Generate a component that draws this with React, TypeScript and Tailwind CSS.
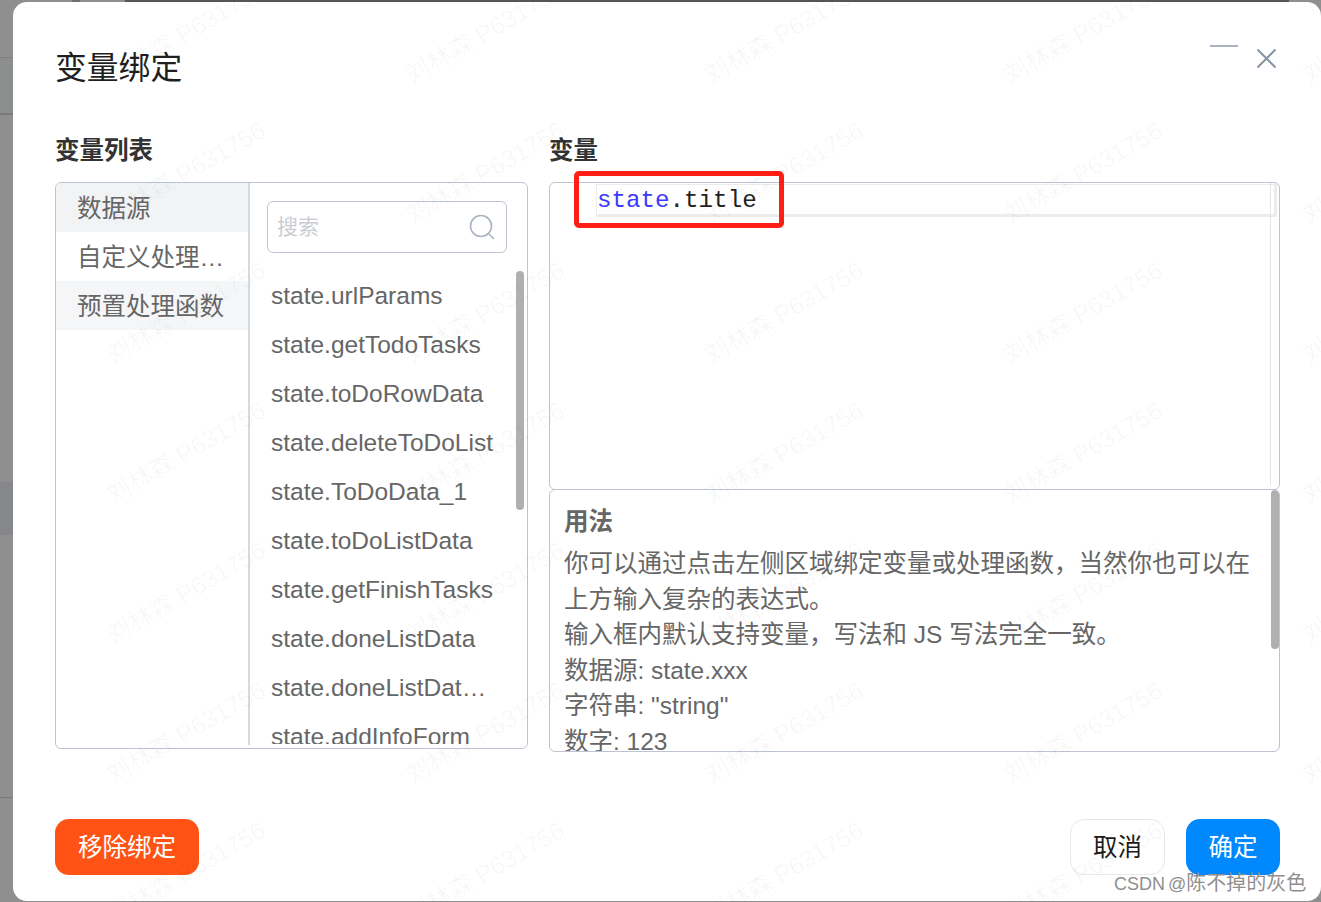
const sans = "font-['Liberation_Sans','Noto_Sans_CJK_SC',sans-serif]";

const vars = [
  "state.urlParams",
  "state.getTodoTasks",
  "state.toDoRowData",
  "state.deleteToDoList",
  "state.ToDoData_1",
  "state.toDoListData",
  "state.getFinishTasks",
  "state.doneListData",
  "state.doneListData_1",
  "state.addInfoForm",
  "state.editInfoForm",
];

const marks = Array.from({ length: 48 });

export default function App() {
  return (
    <div className={`relative h-[902px] w-[1321px] overflow-hidden bg-[#8f8f8f] ${sans}`}>
      {/* dimmed page behind the dialog: top edge */}
      <div className="flex h-[2px]">
        <div className="w-[72px] bg-[#8f8f8f]" />
        <div className="w-[8px] bg-[#6f6f6f]" />
        <div className="w-[45px] bg-[#8f8f8f]" />
        <div className="w-[1164px] bg-[#565656]" />
        <div className="flex-1 bg-[#8f8f8f]" />
      </div>
      <div className="flex">
        {/* dimmed page behind the dialog: left edge */}
        <div className="flex w-[13px] flex-col">
          <div className="h-[56px] border-b border-[#7f7f7f]" />
          <div className="h-[57px] border-b-2 border-[#7a7a7a] bg-[#8c8e8d]" />
          <div className="h-[367px]" />
          <div className="h-[53px] bg-[#85878a]" />
          <div className="h-[263px] border-b border-[#7a7a7a]" />
        </div>

        {/* dialog */}
        <div className="flex h-[899px] w-[1308px] flex-col rounded-[14px] bg-white pl-[42px]">
          <div className="flex h-[131px] pt-[43px]">
            <h1 className="text-[31.8px] leading-[46px] font-normal text-[#1f1f1f]">变量绑定</h1>
          </div>

          <div className="flex gap-[21px]">
            {/* left column */}
            <div className="w-[473px]">
              <h2 className="h-[49px] text-[24.5px] leading-[36px] font-bold text-[#333]">变量列表</h2>
              <div className="flex h-[567px] items-start overflow-hidden rounded-[6px] border border-[#bcc4d1]">
                <div className="h-[562px] w-[194px] shrink-0 border-r-2 border-[#d5dae2] text-[24.5px] text-[#666]">
                  <div className="h-[49px] bg-[#f2f3f5] pt-[1px] pl-[21px] leading-[49px]">数据源</div>
                  <div className="h-[49px] truncate pt-[1px] pr-[20px] pl-[21px] leading-[49px]">自定义处理函数</div>
                  <div className="h-[49px] bg-[#f5f6f7] pt-[1px] pl-[21px] leading-[49px]">预置处理函数</div>
                </div>
                <div className="relative h-full min-w-0 flex-1 pl-[17px]">
                  <div className="mt-[18px] flex h-[52px] w-[240px] items-center justify-between rounded-[6px] border border-[#bcc4d1] pr-[11px] pl-[9px]">
                    <span className="text-[21px] text-[#c9ccd1]">搜索</span>
                    <svg width="26" height="26" viewBox="0 0 26 26" fill="none" stroke="#aab3c0" strokeWidth="1.6">
                      <circle cx="12" cy="12" r="10.5" />
                      <path d="M20 20 L25 25" />
                    </svg>
                  </div>
                  <div className="mt-[18px] h-[473px] overflow-hidden pl-[4px] text-[24.5px] text-[#666]">
                    {vars.map((v) => (
                      <div key={v} className="h-[49px] w-[226px] truncate leading-[49px]">
                        {v}
                      </div>
                    ))}
                  </div>
                  <div className="absolute top-[88px] right-[3px] h-[239px] w-[8px] rounded bg-[#b0b0b0]" />
                </div>
              </div>
            </div>

            {/* right column */}
            <div className="w-[731px]">
              <h2 className="h-[49px] text-[24.5px] leading-[36px] font-bold text-[#333]">变量</h2>
              <div className="relative h-[308px] rounded-[6px] border border-[#bcc4d1] pt-[1px] pl-[46px]">
                <div className="mr-[2px] flex h-[33px] items-center border-t border-r-[3px] border-b-[3px] border-l border-[#ececec] pt-[4px] font-['Liberation_Mono',monospace] text-[24.2px] leading-none text-[#222]">
                  <span className="text-[#3a3aff]">state</span>
                  <span>.title</span>
                </div>
                <div className="absolute top-0 right-[8px] bottom-[4px] w-px bg-[#e4e4e4]" />
                {/* red annotation */}
                <div className="absolute top-[-12px] left-[24px] h-[57px] w-[210px] rounded-[5px] border-[5px] border-[#ff1f14]" />
              </div>
              <div className="relative -mt-px h-[263px] overflow-hidden rounded-[6px] border border-[#bcc4d1] pt-[14px] pr-[28px] pl-[14px] text-[24.5px] leading-[35.6px] text-[#666]">
                <div className="h-[42px] font-bold">用法</div>
                <div>你可以通过点击左侧区域绑定变量或处理函数，当然你也可以在上方输入复杂的表达式。</div>
                <div>输入框内默认支持变量，写法和 JS 写法完全一致。</div>
                <div>数据源: state.xxx</div>
                <div>字符串: "string"</div>
                <div>数字: 123</div>
                <div className="absolute top-0 right-0 h-[159px] w-[8px] rounded bg-[#b0b0b0]" />
              </div>
            </div>
          </div>

          {/* footer */}
          <div className="mt-[67px] flex w-[1225px] justify-between text-[24.5px]">
            <button className="h-[56px] w-[144px] rounded-[14px] bg-[#ff5316] pt-[2px] text-white">移除绑定</button>
            <div className="flex gap-[21px]">
              <button className="h-[56px] w-[95px] rounded-[14px] border border-[#e8e8e8] bg-white pt-[2px] text-[#1a1a1a]">取消</button>
              <button className="h-[56px] w-[94px] rounded-[14px] bg-[#0089ff] pt-[2px] text-white">确定</button>
            </div>
          </div>
        </div>
      </div>

      {/* window controls */}
      <div className="absolute top-[45px] left-[1210px] h-[2px] w-[28px] bg-[#a9b2c0]" />
      <svg className="absolute top-[48px] left-[1256px]" width="21" height="21" viewBox="0 0 21 21" stroke="#8695a5" strokeWidth="2" fill="none">
        <path d="M1.5 1.5 L19.5 19.5 M19.5 1.5 L1.5 19.5" />
      </svg>

      {/* tiled watermark */}
      <div className="pointer-events-none absolute top-[-177px] left-[-262px] grid w-[1794px] grid-cols-[repeat(6,299px)] auto-rows-[140px]">
        {marks.map((_, i) => (
          <div key={i} className="flex items-center justify-center whitespace-nowrap">
            <span className="-rotate-[30deg] text-[24.5px] text-black/[0.035]">刘林森 P631756</span>
          </div>
        ))}
      </div>

      {/* CSDN stamp */}
      <div className="absolute top-[871px] left-[1114px] flex items-baseline gap-[3px] text-[18px] leading-[24px] whitespace-nowrap text-[#8f8f8f]">
        <span>CSDN</span>
        <span>@<span className="text-[20px]">陈不掉的灰色</span></span>
      </div>
    </div>
  );
}
